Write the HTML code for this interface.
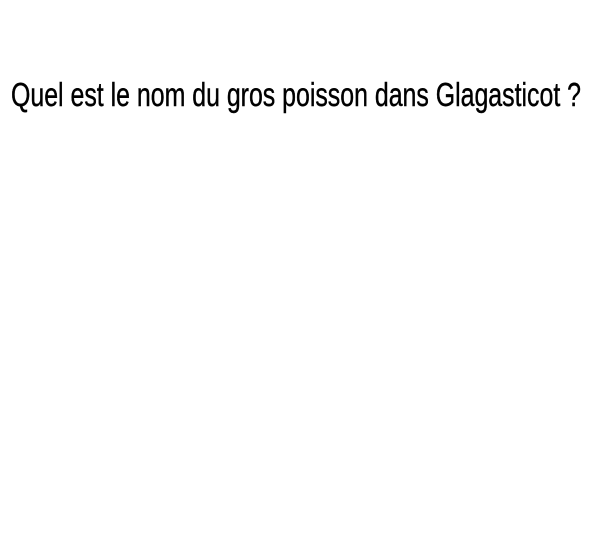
<!DOCTYPE html>
<html><head><meta charset="utf-8"><style>
html,body{margin:0;padding:0;background:#fff;width:593px;height:537px;overflow:hidden}
</style></head><body>
<svg width="593" height="537" xmlns="http://www.w3.org/2000/svg" style="display:block">
<text x="11" y="106" font-family="Liberation Sans, Arial, sans-serif" font-size="33" fill="#000" stroke="#000" stroke-width="0.4" textLength="570" lengthAdjust="spacingAndGlyphs">Quel est le nom du gros poisson dans Glagasticot ?</text>
</svg>
</body></html>
